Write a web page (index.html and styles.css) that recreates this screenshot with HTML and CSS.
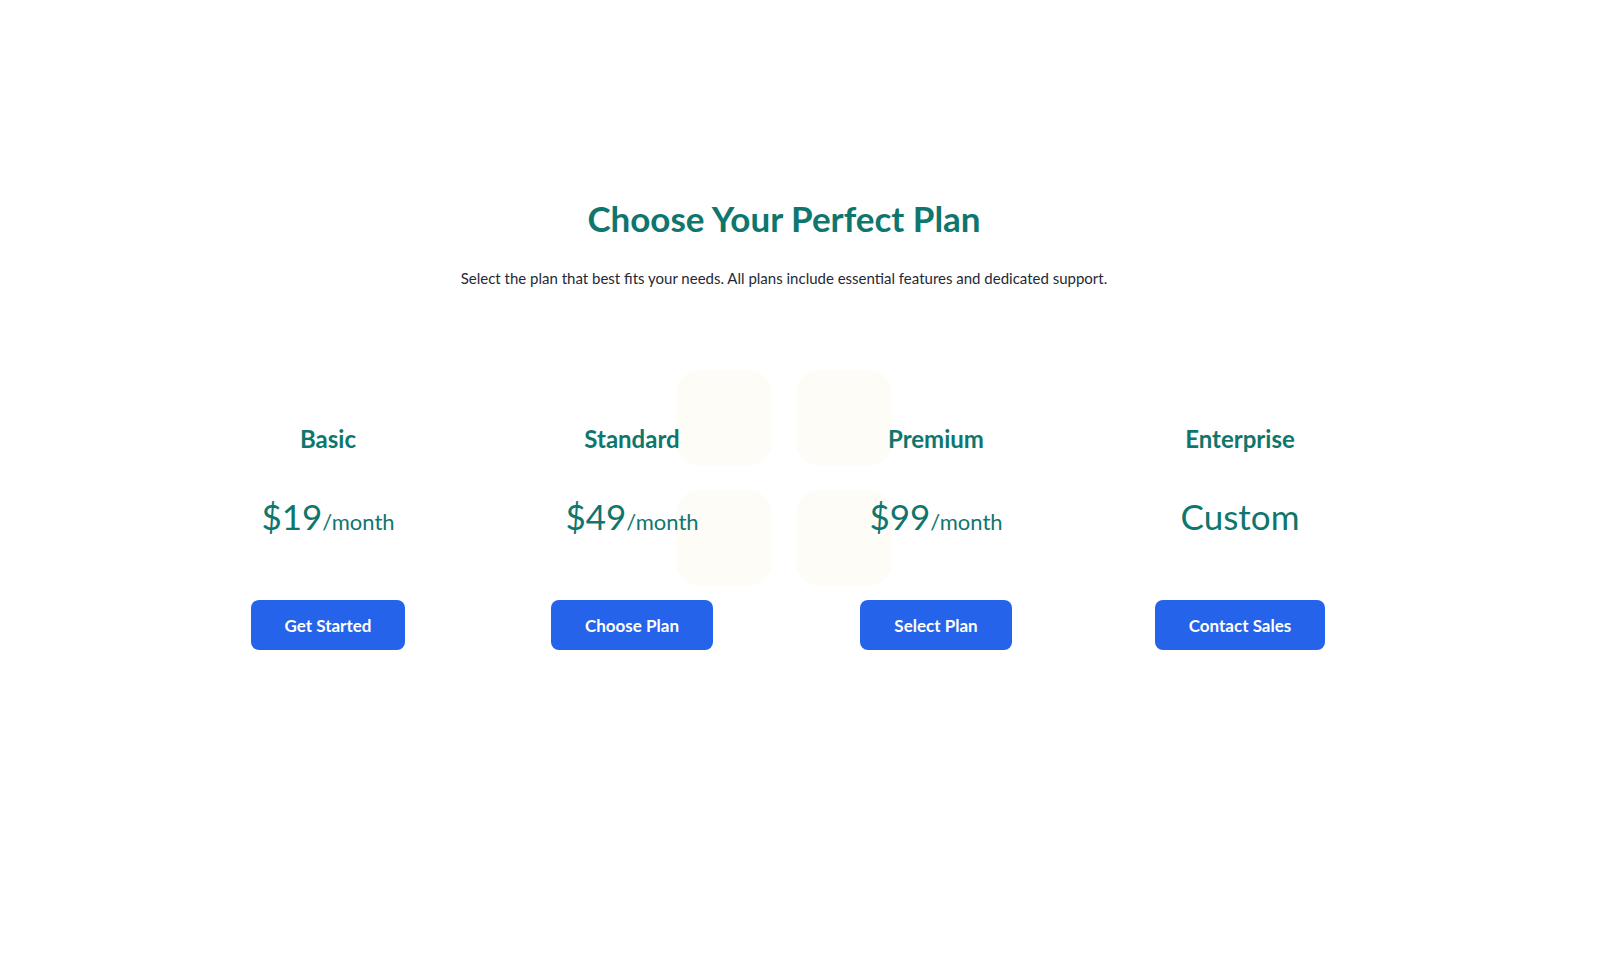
FILE: index.html
```html
<!DOCTYPE html>
<html lang="en">
<head>
<meta charset="utf-8">
<title>Pricing</title>
<link rel="stylesheet" href="styles.css">
</head>
<body>
<div class="page">
  <header class="intro">
    <h1 class="title">Choose Your Perfect Plan</h1>
    <p class="subtitle">Select the plan that best fits your needs. All plans include essential features and dedicated support.</p>
  </header>
  <section class="plans">
    <div class="deco">
      <span class="tile"></span><span class="tile"></span>
      <span class="tile"></span><span class="tile"></span>
    </div>
    <div class="plan">
      <h2 class="plan-name">Basic</h2>
      <div class="price"><span class="amount">$19</span><span class="period">/month</span></div>
      <button class="btn">Get Started</button>
    </div>
    <div class="plan">
      <h2 class="plan-name">Standard</h2>
      <div class="price"><span class="amount">$49</span><span class="period">/month</span></div>
      <button class="btn">Choose Plan</button>
    </div>
    <div class="plan">
      <h2 class="plan-name">Premium</h2>
      <div class="price"><span class="amount">$99</span><span class="period">/month</span></div>
      <button class="btn">Select Plan</button>
    </div>
    <div class="plan">
      <h2 class="plan-name">Enterprise</h2>
      <div class="price"><span class="amount">Custom</span></div>
      <button class="btn">Contact Sales</button>
    </div>
  </section>
</div>
</body>
</html>
```
FILE: styles.css
```css
* { box-sizing: border-box; }
html, body { margin: 0; padding: 0; background: #ffffff; }
body {
  font-family: "Lato", "Inter", "Liberation Sans", sans-serif;
  color: #1f2937;
}
.page {
  width: 1568px;
  padding-top: 196px;
  display: flex;
  flex-direction: column;
  align-items: center;
}
.intro { text-align: center; }
.title {
  margin: 0;
  font-size: 35px;
  line-height: 44px;
  font-weight: 700;
  color: #0f766e;
}
.subtitle {
  margin: 27px 0 0;
  font-size: 15px;
  line-height: 22px;
  color: #1f2937;
}
.plans {
  position: relative;
  margin-top: 135px;
  display: grid;
  grid-template-columns: repeat(4, 272px);
  column-gap: 32px;
}
.deco {
  position: absolute;
  left: 50%;
  top: -54px;
  transform: translateX(-50%);
  display: grid;
  grid-template-columns: 96px 96px;
  grid-template-rows: 96px 96px;
  gap: 24px;
  z-index: 0;
}
.tile {
  display: block;
  background: #fdfcf6;
  border-radius: 24px;
}
.plan {
  position: relative;
  z-index: 1;
  display: flex;
  flex-direction: column;
  align-items: center;
}
.plan-name {
  margin: 0;
  font-size: 24px;
  line-height: 30px;
  font-weight: 700;
  color: #0f766e;
}
.price {
  margin-top: 38px;
  height: 48px;
  display: flex;
  align-items: baseline;
  color: #0f766e;
}
.amount { font-size: 35px; line-height: 48px; }
.period { font-size: 22px; }
.btn {
  margin-top: 60px;
  height: 50px;
  padding: 0 34px;
  border: none;
  border-radius: 8px;
  background: #2563eb;
  color: #ffffff;
  font-family: inherit;
  font-size: 17px;
  font-weight: 700;
  cursor: pointer;
}
```
